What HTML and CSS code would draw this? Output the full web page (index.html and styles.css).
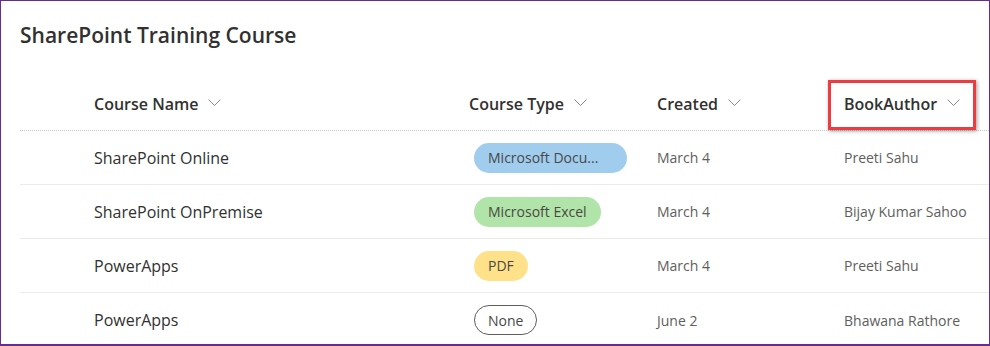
FILE: index.html
```html
<!DOCTYPE html>
<html lang="en">
<head>
<meta charset="utf-8">
<title>SharePoint Training Course</title>
<link rel="stylesheet" href="styles.css">
</head>
<body>
<div class="frame">
  <h1 class="title">SharePoint Training Course</h1>
  <div class="list">
    <div class="row head">
      <div class="cell lead"></div>
      <div class="cell name"><span class="hd">Course Name</span><svg class="chev" width="13" height="8" viewBox="0 0 13 8"><polyline points="0.5,0.5 6.5,6.5 12.5,0.5" /></svg></div>
      <div class="cell type"><span class="hd">Course Type</span><svg class="chev" width="13" height="8" viewBox="0 0 13 8"><polyline points="0.5,0.5 6.5,6.5 12.5,0.5" /></svg></div>
      <div class="cell created"><span class="hd">Created</span><svg class="chev" width="13" height="8" viewBox="0 0 13 8"><polyline points="0.5,0.5 6.5,6.5 12.5,0.5" /></svg></div>
      <div class="cell author"><span class="hd">BookAuthor</span><svg class="chev" width="13" height="8" viewBox="0 0 13 8"><polyline points="0.5,0.5 6.5,6.5 12.5,0.5" /></svg><span class="highlight"></span></div>
    </div>
    <div class="row">
      <div class="cell lead"></div>
      <div class="cell name">SharePoint Online</div>
      <div class="cell type"><span class="pill blue">Microsoft Docu...</span></div>
      <div class="cell created small">March 4</div>
      <div class="cell author small">Preeti Sahu</div>
    </div>
    <div class="row">
      <div class="cell lead"></div>
      <div class="cell name">SharePoint OnPremise</div>
      <div class="cell type"><span class="pill green">Microsoft Excel</span></div>
      <div class="cell created small">March 4</div>
      <div class="cell author small">Bijay Kumar Sahoo</div>
    </div>
    <div class="row">
      <div class="cell lead"></div>
      <div class="cell name">PowerApps</div>
      <div class="cell type"><span class="pill yellow">PDF</span></div>
      <div class="cell created small">March 4</div>
      <div class="cell author small">Preeti Sahu</div>
    </div>
    <div class="row last">
      <div class="cell lead"></div>
      <div class="cell name">PowerApps</div>
      <div class="cell type"><span class="pill outline">None</span></div>
      <div class="cell created small">June 2</div>
      <div class="cell author small">Bhawana Rathore</div>
    </div>
  </div>
</div>
</body>
</html>
```
FILE: styles.css
```css
* { box-sizing: border-box; }
html, body { margin: 0; padding: 0; background: #ffffff; }
body {
  font-family: "Open Sans", "Noto Sans", "Liberation Sans", sans-serif;
  color: #323130;
}
.frame {
  width: 990px;
  height: 346px;
  border: 1px solid #652d90;
  border-bottom-width: 2px;
  overflow: hidden;
  background: #fff;
}
.title {
  margin: 0;
  padding: 20px 0 0 19px;
  height: 77px;
  font-size: 21px;
  line-height: 28px;
  font-weight: 600;
  color: #323130;
}
.list {
  margin-left: 19px;
}
.row {
  display: grid;
  grid-template-columns: 74px 375px 188px 187px 1fr;
  height: 54px;
  border-bottom: 1px solid #edebe9;
  align-items: center;
  font-size: 16px;
  color: #323130;
}
.row.head {
  height: 53px;
  border-bottom: 1px dotted #c8c6c4;
}
.row.last { border-bottom: none; }
.cell {
  display: flex;
  align-items: center;
  white-space: nowrap;
}
.head .cell { font-weight: 600; }
.head .hd { line-height: 22px; }
.chev {
  margin-left: 10px;
  margin-top: -2px;
  fill: none;
  stroke: #8a8886;
  stroke-width: 1;
}
.author { position: relative; }
.highlight {
  position: absolute;
  left: -16px;
  top: -13px;
  width: 148px;
  height: 50px;
  border: 3px solid #ee3b40;
  box-shadow: 1px 1px 4px rgba(0, 0, 0, 0.4);
}
.small {
  font-size: 14px;
  color: #605e5c;
}
.pill {
  display: inline-flex;
  align-items: center;
  height: 30px;
  margin-left: 5px;
  padding: 0 14px;
  border-radius: 15px;
  font-size: 14px;
  color: #4a4846;
}
.pill.blue { background: #a0ccee; width: 153px; }
.pill.green { background: #b0e4a8; }
.pill.yellow { background: #ffe18a; }
.pill.outline { border: 1px solid #605e5c; background: #fff; padding: 0 13px; }
```
